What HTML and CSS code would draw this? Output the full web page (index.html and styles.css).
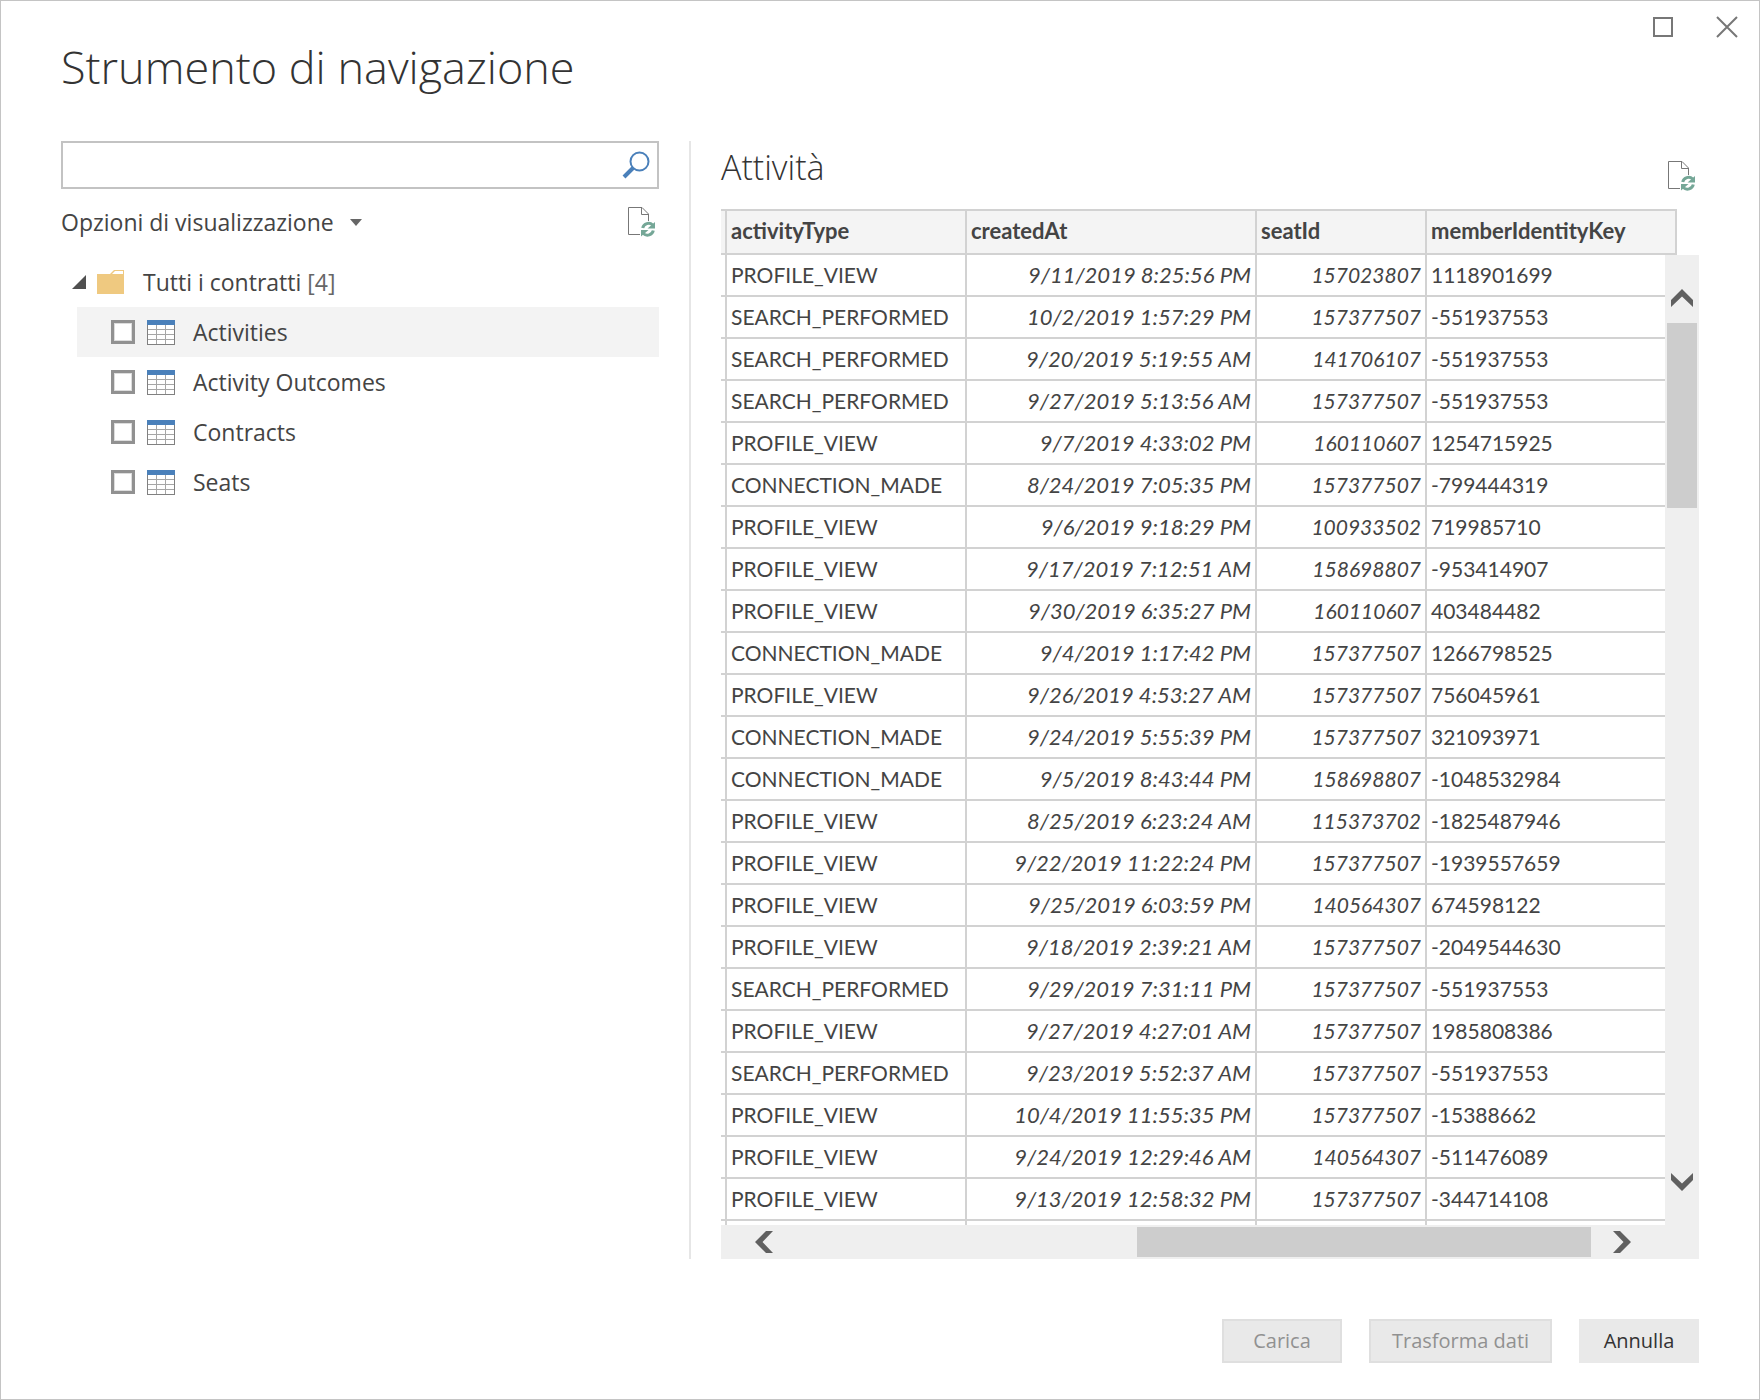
FILE: index.html
```html
<!DOCTYPE html>
<html lang="it">
<head>
<meta charset="utf-8">
<title>Strumento di navigazione</title>
<link rel="stylesheet" href="styles.css">
</head>
<body>
<svg class="defs" aria-hidden="true">
  <symbol id="icon-refresh" viewBox="0 0 28 30">
    <path d="M12 27.500H.5V.5h13.500l6.500 6.500v7M13.500.5v7h7" fill="none" stroke="#777"/>
    <path d="M14.700 21a6 6 0 0 1 10-3M25.300 23.500a6 6 0 0 1-10 3" fill="none" stroke="#75a797" stroke-width="3"/>
    <path d="M27 15v6.500h-7.500zM13 29.500V23h7.500z" fill="#75a797"/>
  </symbol>
  <symbol id="icon-table" viewBox="0 0 28 25">
    <path d="M0 0h28v25H0z" fill="#808080"/>
    <path d="M1 5h26v19H1z" fill="#fff"/>
    <path d="M9.500 5v19M18.500 5v19M1 9.500h26M1 14.500h26M1 19.500h26" stroke="#a6a6a6"/>
    <path d="M0 0h28v5H0z" fill="#4a80ba"/>
  </symbol>
</svg>
<main class="dialog">
  <div class="window-controls">
    <button type="button" aria-label="Ingrandisci"><svg width="22" height="22" viewBox="0 0 22 22"><path d="M2 2h18v18H2z" fill="none" stroke="#777" stroke-width="2"/></svg></button>
    <button type="button" aria-label="Chiudi"><svg width="22" height="22" viewBox="0 0 22 22"><path d="M1 1l20 20M21 1L1 21" fill="none" stroke="#777" stroke-width="2"/></svg></button>
  </div>
  <h1>Strumento di navigazione</h1>
  <div class="panes">
    <section class="browser">
      <div class="search">
        <input type="text" aria-label="Cerca">
        <svg width="28" height="28" viewBox="0 0 28 28"><circle cx="17.500" cy="10.500" r="9" fill="none" stroke="#4a80ba" stroke-width="2"/><path d="M11 17L2 26" stroke="#4a80ba" stroke-width="4"/></svg>
      </div>
      <div class="options">
        <button type="button" class="view-options">Opzioni di visualizzazione <svg width="12" height="7" viewBox="0 0 12 7"><path d="M0 0h12L6 7z" fill="#666"/></svg></button>
        <button type="button" class="refresh" aria-label="Aggiorna"><svg width="28" height="30"><use href="#icon-refresh"/></svg></button>
      </div>
      <div class="folder">
        <svg width="14" height="14" viewBox="0 0 14 14"><path d="M14 0v14H0z" fill="#505050"/></svg>
        <svg width="27" height="24" viewBox="0 0 27 24"><path d="M0 4h13l4-4h10v24H0z" fill="#efc980"/><path d="M18 1h8v3H15z" fill="#fff"/></svg>
        <span>Tutti i contratti <span class="count">[4]</span></span>
      </div>
      <ul class="tree">
        <li class="selected"><label><input type="checkbox"><svg width="28" height="25"><use href="#icon-table"/></svg>Activities</label></li>
        <li><label><input type="checkbox"><svg width="28" height="25"><use href="#icon-table"/></svg>Activity Outcomes</label></li>
        <li><label><input type="checkbox"><svg width="28" height="25"><use href="#icon-table"/></svg>Contracts</label></li>
        <li><label><input type="checkbox"><svg width="28" height="25"><use href="#icon-table"/></svg>Seats</label></li>
      </ul>
    </section>
    <section class="preview">
      <header>
        <h2>Attività</h2>
        <button type="button" class="refresh" aria-label="Aggiorna anteprima"><svg width="28" height="30"><use href="#icon-refresh"/></svg></button>
      </header>
      <div class="grid-view">
        <table>
          <colgroup><col class="c-edge"><col class="c-type"><col class="c-date"><col class="c-seat"><col></colgroup>
          <thead><tr><th></th><th>activityType</th><th>createdAt</th><th>seatId</th><th>memberIdentityKey</th></tr></thead>
          <tbody>
            <tr><td></td><td>PROFILE_VIEW</td><td>9/11/2019 8:25:56 PM</td><td>157023807</td><td>1118901699</td></tr>
            <tr><td></td><td>SEARCH_PERFORMED</td><td>10/2/2019 1:57:29 PM</td><td>157377507</td><td>-551937553</td></tr>
            <tr><td></td><td>SEARCH_PERFORMED</td><td>9/20/2019 5:19:55 AM</td><td>141706107</td><td>-551937553</td></tr>
            <tr><td></td><td>SEARCH_PERFORMED</td><td>9/27/2019 5:13:56 AM</td><td>157377507</td><td>-551937553</td></tr>
            <tr><td></td><td>PROFILE_VIEW</td><td>9/7/2019 4:33:02 PM</td><td>160110607</td><td>1254715925</td></tr>
            <tr><td></td><td>CONNECTION_MADE</td><td>8/24/2019 7:05:35 PM</td><td>157377507</td><td>-799444319</td></tr>
            <tr><td></td><td>PROFILE_VIEW</td><td>9/6/2019 9:18:29 PM</td><td>100933502</td><td>719985710</td></tr>
            <tr><td></td><td>PROFILE_VIEW</td><td>9/17/2019 7:12:51 AM</td><td>158698807</td><td>-953414907</td></tr>
            <tr><td></td><td>PROFILE_VIEW</td><td>9/30/2019 6:35:27 PM</td><td>160110607</td><td>403484482</td></tr>
            <tr><td></td><td>CONNECTION_MADE</td><td>9/4/2019 1:17:42 PM</td><td>157377507</td><td>1266798525</td></tr>
            <tr><td></td><td>PROFILE_VIEW</td><td>9/26/2019 4:53:27 AM</td><td>157377507</td><td>756045961</td></tr>
            <tr><td></td><td>CONNECTION_MADE</td><td>9/24/2019 5:55:39 PM</td><td>157377507</td><td>321093971</td></tr>
            <tr><td></td><td>CONNECTION_MADE</td><td>9/5/2019 8:43:44 PM</td><td>158698807</td><td>-1048532984</td></tr>
            <tr><td></td><td>PROFILE_VIEW</td><td>8/25/2019 6:23:24 AM</td><td>115373702</td><td>-1825487946</td></tr>
            <tr><td></td><td>PROFILE_VIEW</td><td>9/22/2019 11:22:24 PM</td><td>157377507</td><td>-1939557659</td></tr>
            <tr><td></td><td>PROFILE_VIEW</td><td>9/25/2019 6:03:59 PM</td><td>140564307</td><td>674598122</td></tr>
            <tr><td></td><td>PROFILE_VIEW</td><td>9/18/2019 2:39:21 AM</td><td>157377507</td><td>-2049544630</td></tr>
            <tr><td></td><td>SEARCH_PERFORMED</td><td>9/29/2019 7:31:11 PM</td><td>157377507</td><td>-551937553</td></tr>
            <tr><td></td><td>PROFILE_VIEW</td><td>9/27/2019 4:27:01 AM</td><td>157377507</td><td>1985808386</td></tr>
            <tr><td></td><td>SEARCH_PERFORMED</td><td>9/23/2019 5:52:37 AM</td><td>157377507</td><td>-551937553</td></tr>
            <tr><td></td><td>PROFILE_VIEW</td><td>10/4/2019 11:55:35 PM</td><td>157377507</td><td>-15388662</td></tr>
            <tr><td></td><td>PROFILE_VIEW</td><td>9/24/2019 12:29:46 AM</td><td>140564307</td><td>-511476089</td></tr>
            <tr><td></td><td>PROFILE_VIEW</td><td>9/13/2019 12:58:32 PM</td><td>157377507</td><td>-344714108</td></tr>
            <tr><td></td><td></td><td></td><td></td><td></td></tr>
          </tbody>
        </table>
        <div class="scroll-v">
          <button type="button" aria-label="Scorri su"><svg width="22" height="18" viewBox="0 0 22 18"><path d="M0 11L11 0l11 11v7L11 7.500 0 18z" fill="#606060"/></svg></button>
          <div class="track"><div class="thumb"></div></div>
          <button type="button" aria-label="Scorri giù"><svg width="22" height="18" viewBox="0 0 22 18"><path d="M0 7l11 11L22 7V0L11 10.500 0 0z" fill="#606060"/></svg></button>
        </div>
      </div>
      <div class="scroll-h">
        <button type="button" aria-label="Scorri a sinistra"><svg width="18" height="22" viewBox="0 0 18 22"><path d="M11 0L0 11l11 11h7L7.500 11 18 0z" fill="#606060"/></svg></button>
        <div class="track"><div class="thumb"></div></div>
        <button type="button" aria-label="Scorri a destra"><svg width="18" height="22" viewBox="0 0 18 22"><path d="M7 0l11 11L7 22H0l10.500-11L0 0z" fill="#606060"/></svg></button>
      </div>
    </section>
  </div>
  <footer>
    <button type="button" disabled>Carica</button>
    <button type="button" class="wide" disabled>Trasforma dati</button>
    <button type="button">Annulla</button>
  </footer>
</main>
</body>
</html>
```
FILE: styles.css
```css
* { box-sizing: border-box; }

body {
  margin: 0;
  background: #fff;
  color: #444;
  font-family: "Open Sans", "Noto Sans", sans-serif;
  font-size: 23px;
  line-height: 30px;
}

svg { display: block; flex: none; }

.defs { position: absolute; width: 0; height: 0; }

button {
  padding: 0;
  border: 0;
  background: none;
  color: inherit;
  font: inherit;
}

.dialog {
  position: relative;
  display: flex;
  flex-direction: column;
  height: 100vh;
  min-height: 600px;
  padding: 36px 60px;
  border: 1px solid #c4c4c4;
}

.window-controls {
  position: absolute;
  top: 15px;
  right: 21px;
  display: flex;
  gap: 42px;
}

h1 {
  margin: 0 0 44px;
  color: #333;
  font-size: 45px;
  font-weight: 300;
  line-height: 60px;
}

h2 {
  margin: 0;
  color: #333;
  font-size: 34px;
  font-weight: 300;
  line-height: 52px;
}

.panes {
  display: grid;
  grid-template-columns: 630px minmax(0, 1fr);
  flex: 1;
  min-height: 0;
}

.browser {
  padding-right: 30px;
  border-right: 2px solid #e6e6e6;
}

.search {
  display: flex;
  align-items: center;
  height: 48px;
  padding-right: 7px;
  border: 2px solid #c3c3c3;
}

.search input {
  flex: 1;
  height: 100%;
  padding: 0 10px;
  border: 0;
  outline: 0;
  font: inherit;
}

.options {
  display: flex;
  align-items: center;
  justify-content: space-between;
  margin-top: 18px;
  padding-right: 3px;
}

.view-options {
  display: flex;
  align-items: center;
  gap: 16px;
}

.folder {
  display: flex;
  align-items: center;
  height: 50px;
  margin-top: 20px;
  padding-left: 11px;
}

.folder svg + svg { margin: 0 19px 0 11px; }

.count { color: #666; }

.tree {
  margin: 0;
  padding: 0 0 0 16px;
  list-style: none;
}

.tree label {
  display: flex;
  align-items: center;
  height: 50px;
  padding-left: 34px;
}

.tree .selected { background: #f3f3f3; }

.tree input {
  appearance: none;
  width: 24px;
  height: 24px;
  margin: 0 12px 0 0;
  border: 3px solid #919191;
  background: #fff;
  box-shadow: inset 0 0 0 1px #ddd;
}

.tree svg { margin-right: 18px; }

.preview {
  display: flex;
  flex-direction: column;
  min-width: 0;
  min-height: 0;
  padding-left: 30px;
}

.preview header {
  display: flex;
  align-items: flex-start;
  justify-content: space-between;
  height: 68px;
  padding-right: 3px;
}

.preview .refresh { margin-top: 20px; }

.grid-view {
  position: relative;
  flex: 1;
  min-height: 0;
  overflow: hidden;
}

table {
  width: calc(100% - 22px);
  table-layout: fixed;
  border-collapse: separate;
  border-spacing: 0;
  font-family: Lato, sans-serif;
  font-size: 21px;
  line-height: 28px;
}

.c-edge { width: 6px; }
.c-type { width: 240px; }
.c-date { width: 290px; }
.c-seat { width: 170px; }

th, td {
  height: 42px;
  padding: 0 4px;
  border: solid #d2d2d2;
  border-width: 0 2px 2px 0;
  text-align: left;
  white-space: nowrap;
}

th {
  height: 46px;
  padding-bottom: 2px;
  border-top-width: 2px;
  background: #f4f4f4;
  font-size: 22px;
}

th:first-child, td:first-child { padding: 0; }

td:nth-child(3), td:nth-child(4) {
  font-style: italic;
  text-align: right;
}

td:nth-child(3) { font-size: 22px; }

.scroll-v, .scroll-h {
  display: flex;
  align-items: center;
  background: #efefef;
}

.scroll-v {
  position: absolute;
  top: 46px;
  right: 0;
  bottom: 0;
  flex-direction: column;
  width: 34px;
  padding: 34px 0;
}

.scroll-h {
  height: 34px;
  padding: 0 68px 0 34px;
}

.track { flex: 1; }

.scroll-v .track { margin: 16px 0; }
.scroll-h .track { margin: 0 22px 0 16px; }

.thumb { background: #cdcdcd; }

.scroll-v .thumb {
  width: 30px;
  height: 185px;
}

.scroll-h .thumb {
  width: 454px;
  height: 30px;
  margin-left: auto;
}

footer {
  display: flex;
  justify-content: flex-end;
  gap: 27px;
  margin-top: 60px;
}

footer button {
  width: 120px;
  height: 44px;
  background: #e9e9e9;
  color: #333;
  font-size: 20px;
}

footer .wide { width: 183px; }

footer button:disabled {
  border: 2px solid #dfdfdf;
  color: #919191;
}
```
